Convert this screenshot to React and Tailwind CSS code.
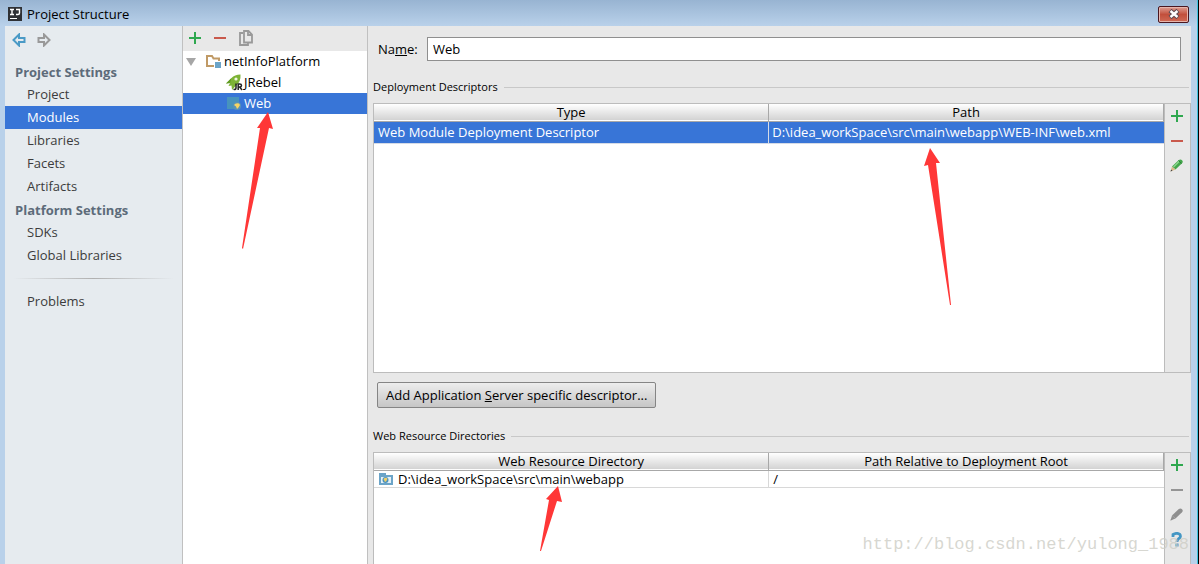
import clsx from "clsx"

const projectSettings = ["Project", "Modules", "Libraries", "Facets", "Artifacts"]
const platformSettings = ["SDKs", "Global Libraries"]

function PlusIcon() {
    return (
        <svg width="12" height="12" viewBox="0 0 12 12">
            <path d="M5 0h2v5h5v2H7v5H5V7H0V5h5z" fill="#2fa84f" />
        </svg>
    )
}

function MinusIcon({ color = "#c9594c" }) {
    return (
        <svg width="12" height="12" viewBox="0 0 12 12">
            <path d="M0 5h12v2H0z" fill={color} />
        </svg>
    )
}

function CopyIcon() {
    return (
        <svg width="14" height="16" viewBox="0 0 14 16" fill="none" stroke="#999" strokeWidth="1.8">
            <path d="M4 3H1v12h8v-2" />
            <path d="M5 1h4.500L13 4.500V12.500H5z" />
            <path d="M9 1v4h4" />
        </svg>
    )
}

function ArrowIcon({ color, flip }) {
    return (
        <svg width="14" height="14" viewBox="0 0 14 14" className={clsx(flip && "-scale-x-100")}>
            <path d="M1.500 7 7 1.500V5h5.500v4H7v3.500z" fill="none" stroke={color} strokeWidth="2" />
        </svg>
    )
}

function PencilIcon({ disabled }) {
    return (
        <svg width="13" height="13" viewBox="0 0 13 13">
            <path d="M2 7.500 8.500 1.200q2-1.500 3.500 0t0 3L5.500 10.500z" fill={disabled ? "#8f8f8f" : "#43a64b"} />
            {!disabled && <path d="M3.500 8 9.500 2" stroke="#8bd58c" strokeWidth="1.500" />}
            {!disabled && <path d="M8.500 1.500l3 3" stroke="#2d7d39" strokeWidth="1" />}
            <path d="M2 7.500l3.500 3L.5 12.500z" fill={disabled ? "#8f8f8f" : "#d9b98a"} />
            <path d="M1.200 10.500l1.300 1.200-2 .9z" fill={disabled ? "#8f8f8f" : "#444"} />
        </svg>
    )
}

function HelpIcon() {
    return (
        <svg width="12" height="15" viewBox="0 0 12 15">
            <path d="M2 5V2.500Q6 .3 8.800 2.300 10.500 5 7.500 6.800 6 7.800 6 10" fill="none" stroke="#4597c4" strokeWidth="2.800" />
            <path d="M4.500 11.500h3v3h-3z" fill="#4597c4" />
        </svg>
    )
}

function IdeaLogo() {
    return (
        <svg width="14" height="14" viewBox="0 0 14 14">
            <path d="M0 0h14v14H0z" fill="#2f3135" />
            <path d="M2 2.500h4M4 2.500v5M2 7.500h4M8 2.500h3.500v3.500q0 1.500-1.500 1.500H8" fill="none" stroke="#fff" strokeWidth="1.400" />
            <path d="M2 11.500h7" stroke="#fff" />
        </svg>
    )
}

function FolderIcon() {
    return (
        <svg width="15" height="13" viewBox="0 0 15 13">
            <path d="M1 11V1h5l1.500 2.500H13V11z" fill="none" stroke="#c09a66" strokeWidth="2" />
            <path d="M8 6h7v7H8z" fill="#fff" />
            <path d="M9 7h6v6H9z" fill="#6ba4c8" />
        </svg>
    )
}

function RocketIcon() {
    return (
        <svg width="17" height="17" viewBox="0 0 17 17">
            <path d="M14.500.5Q8.500.5 5.500 4L0 9.500l4-.5L2.500 12l3-.5L6 16l4-4.500Q15 8 14.500.5z" fill="#7db336" />
            <path d="M5.500 4 0 9.500l4-.5z" fill="#5f9a22" />
            <circle cx="10" cy="5" r="1.600" fill="#eef7df" />
            <path
                d="M10 9.500v4.500q0 1.800-2.500 1.300M12.200 16V10h1.500q1.800 0 1.800 1.500T13.700 13h-1.500m1.500 0 2.300 3"
                fill="none"
                stroke="#222"
                strokeWidth="1.500"
            />
        </svg>
    )
}

function WebIcon() {
    return (
        <svg width="14" height="13" viewBox="0 0 14 13">
            <path d="M0 0h12v12H0z" fill="#4793bd" />
            <circle cx="10" cy="9" r="4" fill="#5a93b5" />
            <path d="M7 8Q8.500 5.500 12 6.500l1 1.500-1.500 2.500-1.500 1.500-1-2.500z" fill="#f6d564" />
        </svg>
    )
}

function WebFolderIcon() {
    return (
        <svg width="14" height="12" viewBox="0 0 14 12">
            <path d="M0 0h7v2h7v10H0z" fill="#6ba4c8" />
            <path d="M2 4h10v6H2z" fill="#e4f0f7" />
            <circle cx="6.500" cy="7" r="3" fill="#4b92bd" />
            <path d="M4.500 6q2-2 4-.5l-1 2.500-1.500 1z" fill="#f1cf66" />
        </svg>
    )
}

function SidebarItem({ label, active }) {
    return (
        <li>
            <button className={clsx("block w-full h-[23px] pl-[22px] text-left", active ? "bg-[#3875d7] text-white" : "text-[#3c3c3c]")}>
                {label}
            </button>
        </li>
    )
}

function SidebarHeading({ children }) {
    return <h2 className="h-[23px] pl-[10px] leading-[25px] font-bold text-[#5d6b7a]">{children}</h2>
}

function Sidebar() {
    return (
        <nav className="w-[178px] shrink-0 bg-[#e6ebef] border-r border-[#c0c0c0]">
            <div className="h-[34px] flex gap-[11px] px-[7px] pt-[7px] items-start">
                <button aria-label="Back" className="block"><ArrowIcon color="#4a9ac6" /></button>
                <button aria-label="Forward" className="block"><ArrowIcon color="#999" flip /></button>
            </div>
            <SidebarHeading>Project Settings</SidebarHeading>
            <ul>
                {projectSettings.map((item) => (
                    <SidebarItem key={item} label={item} active={item === "Modules"} />
                ))}
            </ul>
            <SidebarHeading>Platform Settings</SidebarHeading>
            <ul>
                {platformSettings.map((item) => (
                    <SidebarItem key={item} label={item} />
                ))}
            </ul>
            <div className="h-[23px] px-2 flex items-center">
                <div className="h-px w-full bg-linear-to-r from-transparent via-[#b0b0b0] to-transparent" />
            </div>
            <ul>
                <SidebarItem label="Problems" />
            </ul>
        </nav>
    )
}

function ModuleTree() {
    return (
        <section className="w-[185px] shrink-0 bg-white border-r border-[#c0c0c0]">
            <div className="h-[25px] flex items-center gap-[13px] px-[6px] pb-[2px] bg-[#e8e8e8]">
                <button aria-label="Add"><PlusIcon /></button>
                <button aria-label="Remove"><MinusIcon /></button>
                <button aria-label="Copy"><CopyIcon /></button>
            </div>
            <ul>
                <li className="h-[21px] flex items-center pl-[3px]">
                    <svg width="10" height="8" viewBox="0 0 10 8" className="mr-[10px]">
                        <path d="M0 0h10L5 8z" fill="#a6a6a6" />
                    </svg>
                    <FolderIcon />
                    <span className="pl-[3px]">netInfoPlatform</span>
                </li>
                <li className="h-[21px] flex items-center pl-[43px] gap-px">
                    <RocketIcon />
                    <span>JRebel</span>
                </li>
                <li className="h-[21px] flex items-center pl-11 gap-[3px] bg-[#3875d7] text-white">
                    <WebIcon />
                    <span>Web</span>
                </li>
            </ul>
        </section>
    )
}

function GroupTitle({ children }) {
    return (
        <div className="flex items-center gap-[6px] pr-[2px] text-[11px] leading-4">
            <h3>{children}</h3>
            <div className="flex-1 h-px bg-[#c8c8c8]" />
        </div>
    )
}

function HeadRow({ columns }) {
    return (
        <thead>
            <tr className="h-[17px] bg-linear-to-b from-white to-[#d3d3d3] border-b border-[#a8a8a8]">
                {columns.map((column) => (
                    <th key={column} className="w-1/2 p-0 font-normal leading-4 border-r border-[#a8a8a8]">{column}</th>
                ))}
            </tr>
        </thead>
    )
}

function ToolButton({ label, children }) {
    return (
        <button aria-label={label} className="h-[25px] w-full flex items-center justify-center pb-[2px] pr-[2px]">
            {children}
        </button>
    )
}

function RedArrow({ className, points }) {
    return (
        <svg className={clsx("absolute pointer-events-none", className)}>
            <polygon points={points} fill="#ff3737" />
        </svg>
    )
}

export default function App() {
    return (
        <div className="relative min-h-screen flex flex-col bg-[#b9d1ea] text-[13px] leading-[23px] text-black font-['Open_Sans','Noto_Sans_CJK_SC',sans-serif] overflow-hidden border-r border-black">
            <header className="h-[26px] flex items-center pl-2 pr-2 pt-[2px] bg-linear-to-b from-[#98b4d2] to-[#b9d1ea] border-r border-[#3fc3e0]">
                <IdeaLogo />
                <h1 className="pl-[5px] flex-1">Project Structure</h1>
                <button
                    aria-label="Close"
                    className="w-[31px] h-[17px] flex items-center justify-center rounded-xs border border-[#4a1720] bg-linear-to-b from-[#dd9d92] via-[#c24f3c] via-50% to-[#cf6a55] inset-ring inset-ring-[#e6b5ac]"
                >
                    <svg width="12" height="10" viewBox="0 0 12 10">
                        <path d="M2 1.500l8 7M10 1.500l-8 7" stroke="#5d4a52" strokeWidth="4.500" />
                        <path d="M2.500 2l7 6M9.500 2l-7 6" stroke="#fff" strokeWidth="2.400" />
                    </svg>
                </button>
            </header>

            <div className="flex-1 flex pl-[5px] pr-[6px] border-r border-[#3fc3e0]">
                <Sidebar />
                <ModuleTree />

                <main className="flex-1 min-w-0 flex flex-col bg-[#e8e8e8] pl-[5px]">
                    <div className="flex items-center pt-[11px] pl-[5px] pr-[10px]">
                        <label htmlFor="name" className="w-[49px]">Na<u>m</u>e:</label>
                        <input id="name" defaultValue="Web" className="flex-1 h-6 px-[5px] bg-white border border-[#8f8f8f]" />
                    </div>

                    <div className="pt-[18px] pb-2">
                        <GroupTitle>Deployment Descriptors</GroupTitle>
                    </div>
                    <div className="flex border border-[#bcbcbc]">
                        <div className="flex-1 h-[268px] bg-white border-r border-[#bcbcbc]">
                            <table className="w-full table-fixed border-collapse">
                                <HeadRow columns={["Type", "Path"]} />
                                <tbody>
                                    <tr className="h-[22px] bg-[#3875d7] text-white border-b border-[#d5dbe6]">
                                        <td className="p-0 pl-1 leading-5 border-r border-[#d5dbe6]">Web Module Deployment Descriptor</td>
                                        <td className="p-0 pl-[3px] leading-5">D:\idea_workSpace\src\main\webapp\WEB-INF\web.xml</td>
                                    </tr>
                                </tbody>
                            </table>
                        </div>
                        <div className="w-[25px]">
                            <ToolButton label="Add descriptor"><PlusIcon /></ToolButton>
                            <ToolButton label="Remove descriptor"><MinusIcon /></ToolButton>
                            <ToolButton label="Edit descriptor"><PencilIcon /></ToolButton>
                        </div>
                    </div>

                    <div className="pt-[9px] pl-1">
                        <button className="h-[26px] px-2 rounded-xs border border-[#858585] bg-linear-to-b from-[#ededed] to-[#c6c6c6]">
                            Add Application <u>S</u>erver specific descriptor...
                        </button>
                    </div>

                    <div className="pt-5 pb-2">
                        <GroupTitle>Web Resource Directories</GroupTitle>
                    </div>
                    <div className="flex-1 flex border border-b-0 border-[#bcbcbc]">
                        <div className="flex-1 bg-white border-r border-[#bcbcbc]">
                            <table className="w-full table-fixed border-collapse">
                                <HeadRow columns={["Web Resource Directory", "Path Relative to Deployment Root"]} />
                                <tbody>
                                    <tr className="h-[17px] border-b border-[#d8d8d8]">
                                        <td className="p-0 pl-[5px] leading-4 border-r border-[#d8d8d8]">
                                            <div className="flex items-center gap-[5px]">
                                                <WebFolderIcon />
                                                D:\idea_workSpace\src\main\webapp
                                            </div>
                                        </td>
                                        <td className="p-0 pl-1 leading-4">/</td>
                                    </tr>
                                </tbody>
                            </table>
                        </div>
                        <div className="w-[25px]">
                            <ToolButton label="Add directory"><PlusIcon /></ToolButton>
                            <ToolButton label="Remove directory"><MinusIcon color="#959595" /></ToolButton>
                            <ToolButton label="Edit directory"><PencilIcon disabled /></ToolButton>
                            <ToolButton label="Help"><HelpIcon /></ToolButton>
                        </div>
                    </div>
                </main>
            </div>

            {/* annotations drawn over the dialog */}
            <RedArrow className="left-[242px] top-[112px] w-8 h-[138px]" points="26,0 15,16 18,16 0,136 1,137 27,16 31,17" />
            <RedArrow className="left-[924px] top-[148px] w-7 h-[158px]" points="6,0 0,18 4,17 26,157 27,157 12,15 16,15" />
            <RedArrow className="left-[540px] top-[486px] w-6 h-[66px]" points="18,0 6,13 9,14 0,65 1,65 17,15 22,16" />
            <p className="absolute right-[9px] bottom-2 text-[17px] font-['Liberation_Mono',monospace] text-[#cdcdc5]/80 pointer-events-none">
                http://blog.csdn.net/yulong_1988
            </p>
        </div>
    )
}
